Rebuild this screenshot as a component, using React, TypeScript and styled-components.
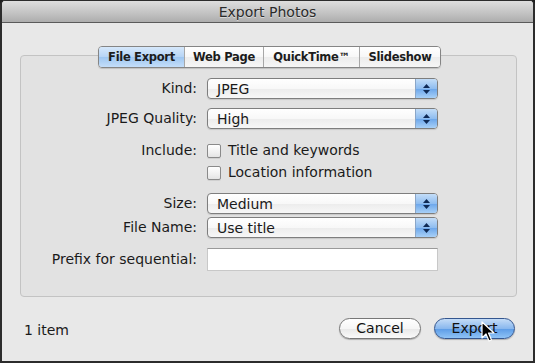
import React from 'react'
import styled, { createGlobalStyle } from 'styled-components'

const GlobalStyle = createGlobalStyle`
  html, body {
    margin: 0;
    padding: 0;
    background: #1e1e1e;
  }
  body {
    font-family: 'DejaVu Sans', 'Liberation Sans', sans-serif;
    color: #1a1a1a;
  }
`

const Window = styled.div`
  position: relative;
  box-sizing: border-box;
  width: 535px;
  height: 363px;
  display: flex;
  flex-direction: column;
  background: #e8e8e8;
  border: 2px solid #2c2c2c;
  border-top-width: 1px;
  border-radius: 5px 5px 0 0;
  overflow: hidden;
`

const TitleBar = styled.div`
  height: 21px;
  flex: none;
  display: flex;
  align-items: center;
  justify-content: center;
  background: linear-gradient(#dedede, #c4c4c4 55%, #adadad);
  border-bottom: 1px solid #5a5a5a;
  font-size: 14px;
  color: #2a2a2a;
  text-shadow: 0 1px 0 rgba(255, 255, 255, 0.5);
`

const Body = styled.div`
  flex: 1;
  display: flex;
  flex-direction: column;
  padding: 23px 16px 0 18px;
`

const Tabs = styled.div`
  align-self: center;
  display: flex;
  height: 20px;
  margin-bottom: -13px;
  margin-left: 2px;
  position: relative;
  z-index: 1;
  border: 1px solid #858585;
  border-radius: 4px;
  overflow: hidden;
  box-shadow: 0 1px 1px rgba(0, 0, 0, 0.15);
`

const Tab = styled.div<{ $active?: boolean; $w: number }>`
  width: ${({ $w }) => $w}px;
  display: flex;
  align-items: center;
  justify-content: center;
  font-size: 11.5px;
  font-weight: bold;
  letter-spacing: -0.3px;
  color: #1c1c1c;
  background: ${({ $active }) =>
    $active
      ? 'linear-gradient(#d6e8fb, #b6d4f5 50%, #9ec6f1 51%, #c4def9)'
      : 'linear-gradient(#ffffff, #f7f7f7 50%, #ececec 51%, #f6f6f6)'};
  & + & {
    border-left: 1px solid #a7a7a7;
  }
`

const GroupBox = styled.div`
  box-sizing: border-box;
  height: 242px;
  background: #e2e2e2;
  border: 1px solid #c3c3c3;
  border-radius: 4px;
  padding: 22px 0 0 0;
  display: flex;
  flex-direction: column;
`

const Row = styled.div<{ $top?: number }>`
  display: grid;
  grid-template-columns: 176px 231px;
  column-gap: 10px;
  align-items: center;
  margin-top: ${({ $top }) => $top ?? 0}px;
`

const Label = styled.div`
  text-align: right;
  font-size: 14px;
  line-height: 17px;
  white-space: nowrap;
`

const Popup = styled.div`
  box-sizing: border-box;
  height: 21px;
  display: flex;
  align-items: stretch;
  border: 1px solid #7e7e7e;
  border-radius: 4px;
  overflow: hidden;
  background: linear-gradient(#ffffff, #f8f8f8 50%, #ececec 51%, #f7f7f7);
  box-shadow: 0 1px 1px rgba(0, 0, 0, 0.12);
`

const PopupText = styled.div`
  flex: 1;
  display: flex;
  align-items: center;
  padding-left: 9px;
  font-size: 14px;
`

const Stepper = styled.div`
  width: 21px;
  display: flex;
  flex-direction: column;
  align-items: center;
  justify-content: center;
  gap: 2px;
  border-left: 1px solid #8aa6c8;
  background: linear-gradient(#c3ddf8, #8fbdf0 50%, #6aa5ea 51%, #a8d0f7);
`

const CheckLine = styled.div`
  display: flex;
  align-items: center;
  gap: 7px;
  font-size: 14px;
  line-height: 17px;
`

const CheckBox = styled.div`
  box-sizing: border-box;
  width: 14px;
  height: 14px;
  border: 1px solid #8a8a8a;
  border-radius: 2px;
  background: linear-gradient(#ffffff, #f0f0f0 60%, #e4e4e4);
  box-shadow: 0 1px 0 rgba(0, 0, 0, 0.08);
`

const TextField = styled.div`
  box-sizing: border-box;
  height: 23px;
  background: #ffffff;
  border: 1px solid #c8c8c8;
  border-top-color: #9a9a9a;
`

const Footer = styled.div`
  flex: 1;
  display: flex;
  align-items: center;
  justify-content: space-between;
  padding: 0 0 2px 4px;
  margin-right: 2px;
`

const Status = styled.div`
  font-size: 14px;
  margin-top: 4px;
`

const Buttons = styled.div`
  display: flex;
  gap: 13px;
`

const Button = styled.div<{ $primary?: boolean }>`
  box-sizing: border-box;
  width: ${({ $primary }) => ($primary ? 81 : 82)}px;
  height: 21px;
  display: flex;
  align-items: center;
  justify-content: center;
  font-size: 14px;
  border-radius: 11px;
  border: 1px solid ${({ $primary }) => ($primary ? '#34568f' : '#777777')};
  background: ${({ $primary }) =>
    $primary
      ? 'linear-gradient(#c4dcf7, #8ab8ee 50%, #5b9be6 51%, #8fc3f6)'
      : 'linear-gradient(#ffffff, #f6f6f6 50%, #e8e8e8 51%, #fafafa)'};
  box-shadow: 0 1px 1px rgba(0, 0, 0, 0.25);
  color: #111;
`

const Cursor = styled.svg`
  position: absolute;
  left: 479px;
  top: 320px;
`

function Arrows() {
  return (
    <>
      <svg width="7" height="4" viewBox="0 0 7 4">
        <path d="M3.5 0 L7 4 L0 4 Z" fill="#0f2a55" />
      </svg>
      <svg width="7" height="4" viewBox="0 0 7 4">
        <path d="M0 0 L7 0 L3.5 4 Z" fill="#0f2a55" />
      </svg>
    </>
  )
}

function PopupButton({ value }: { value: string }) {
  return (
    <Popup>
      <PopupText>{value}</PopupText>
      <Stepper>
        <Arrows />
      </Stepper>
    </Popup>
  )
}

const TABS = [
  { label: 'File Export', w: 85, active: true },
  { label: 'Web Page', w: 78 },
  { label: 'QuickTime™', w: 95 },
  { label: 'Slideshow', w: 80 }
]

export default function App() {
  return (
    <Window>
      <GlobalStyle />
      <TitleBar>Export Photos</TitleBar>
      <Body>
        <Tabs>
          {TABS.map(t => (
            <Tab key={t.label} $active={t.active} $w={t.w}>
              {t.label}
            </Tab>
          ))}
        </Tabs>
        <GroupBox>
          <Row>
            <Label>Kind:</Label>
            <PopupButton value="JPEG" />
          </Row>
          <Row $top={9}>
            <Label>JPEG Quality:</Label>
            <PopupButton value="High" />
          </Row>
          <Row $top={13}>
            <Label>Include:</Label>
            <CheckLine>
              <CheckBox />
              Title and keywords
            </CheckLine>
          </Row>
          <Row $top={5}>
            <Label />
            <CheckLine>
              <CheckBox />
              Location information
            </CheckLine>
          </Row>
          <Row $top={12}>
            <Label>Size:</Label>
            <PopupButton value="Medium" />
          </Row>
          <Row $top={3}>
            <Label>File Name:</Label>
            <PopupButton value="Use title" />
          </Row>
          <Row $top={10}>
            <Label>Prefix for sequential:</Label>
            <TextField />
          </Row>
        </GroupBox>
        <Footer>
          <Status>1 item</Status>
          <Buttons>
            <Button>Cancel</Button>
            <Button $primary>Export</Button>
          </Buttons>
        </Footer>
      </Body>
      <Cursor width="14" height="22" viewBox="0 0 14 22">
        <path
          d="M1 1 L1 17 L5 13 L8 20 L10.5 19 L7.5 12 L13 12 Z"
          fill="#000"
          stroke="#fff"
          strokeWidth="1.2"
          strokeLinejoin="round"
        />
      </Cursor>
    </Window>
  )
}
